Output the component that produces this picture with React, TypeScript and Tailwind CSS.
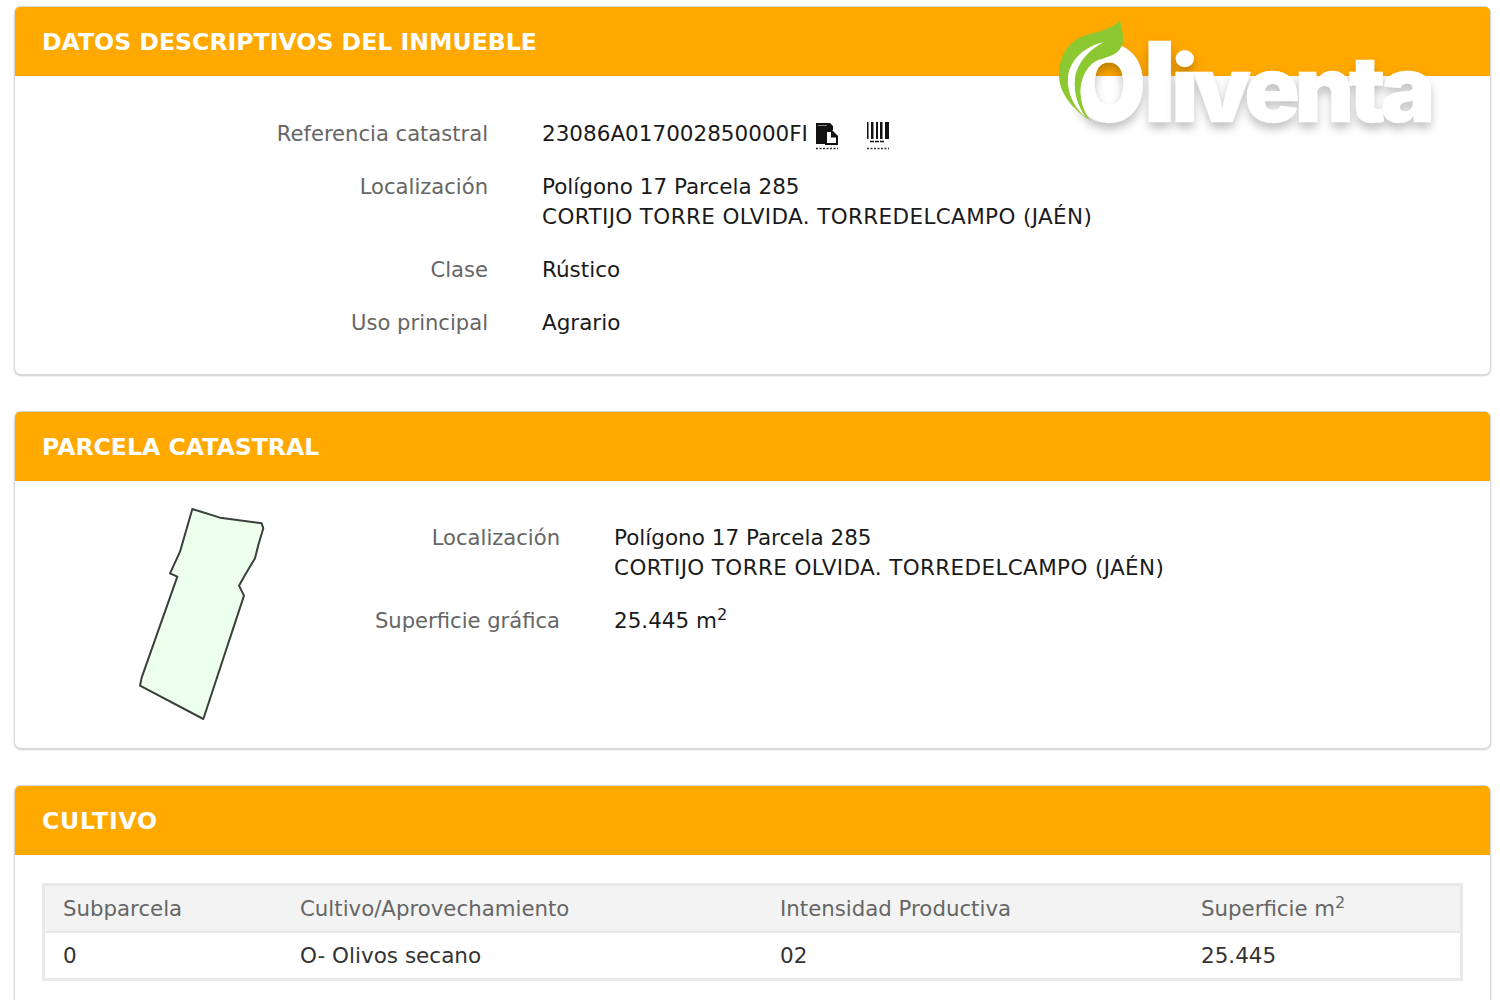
import React from "react";

const font = "font-['DejaVu_Sans',Verdana,sans-serif]";

function Header({ title, extra }: { title: string; extra?: string }) {
  return (
    <div className={`h-[69px] bg-[#ffa800] rounded-t-[5px] flex items-center pl-[27px] pt-[2px] text-white font-bold text-[23.600px] leading-none ${extra ?? ""}`}>
      {title}
    </div>
  );
}

function Row({ label, children }: { label: string; children: React.ReactNode }) {
  return (
    <>
      <div className="text-right text-[#666666] text-[21.100px]">{label}</div>
      <div className="text-[#1a1a1a]">{children}</div>
    </>
  );
}

function Caps() {
  return (
    <span className="tracking-[0.37px] [font-variant-ligatures:none]">CORTIJO TORRE OLVIDA. TORREDELCAMPO (JAÉN)</span>
  );
}

function CopyIcon() {
  return (
    <svg width="24" height="28" viewBox="0 0 24 28" className="shrink-0">
      <path d="M0 1h14l3 3v4h-6v14H0z" fill="#111" />
      <path d="M2 3.500h9" stroke="#888" strokeWidth="1" />
      <path d="M9 8h7l6 6v9H9z" fill="#111" />
      <path d="M11 10h4v5.500h5V21h-9z" fill="#fff" />
      <path d="M0 26.500h22" stroke="#333" strokeWidth="1.500" strokeDasharray="2 1.500" />
    </svg>
  );
}

function BarcodeIcon() {
  return (
    <svg width="24" height="28" viewBox="0 0 24 28" className="shrink-0">
      <path d="M0 0h1.500v17H0zM4 0h2.500v17H4zM9 0h2v17H9zM13 0h2.500v17H13zM18 0h4v17h-4z" fill="#111" />
      <path d="M3 19.500h14" stroke="#111" strokeWidth="1.500" strokeDasharray="4 1" />
      <path d="M0 26.500h22" stroke="#333" strokeWidth="1.500" strokeDasharray="2 1.500" />
    </svg>
  );
}

function Logo() {
  return (
    <div className="absolute left-[1040px] top-0 w-[460px] h-[150px] pointer-events-none">
      <div className="absolute left-[32px] top-[21px] text-white font-['Inter',sans-serif] font-black leading-[120px] whitespace-nowrap [text-shadow:0_6px_10px_rgba(0,0,0,0.25)] [-webkit-text-stroke:0.5px_white] flex items-baseline">
        <span className="inline-block text-[106px] origin-left scale-x-[0.9] tracking-[-11px]">O</span>
        <span className="text-[112px] tracking-[-5px]">l</span>
        <span className="text-[92px] tracking-[-5.500px]">iventa</span>
      </div>
      <svg width="460" height="150" viewBox="0 0 1380 450" className="absolute left-0 top-0">
        <path
          d="M240 60C244 85 256 120 244 140C232 165 205 170 175 180C140 195 118 240 122 285C125 320 138 345 152 362C95 325 58 280 57 225C56 170 85 125 130 108C170 95 215 90 240 60Z"
          fill="#8cc832"
        />
        <path
          d="M192 126C135 140 92 175 84 230C80 280 105 325 135 348C115 320 100 280 105 235C112 185 150 148 192 126Z"
          fill="#fff"
        />
      </svg>
    </div>
  );
}

export default function App() {
  const card = "border border-[#d8d8d8] rounded-[7px] bg-white shadow-[0_1px_2px_rgba(0,0,0,0.2)]";
  return (
    <div className={`${font} relative h-[1000px] overflow-hidden bg-white pl-[14px] pr-[9px] pt-[6px] text-[21.500px] leading-[30px]`}>
      <div className="flex flex-col gap-[36px]">
        <section className={card}>
          <Header title="DATOS DESCRIPTIVOS DEL INMUEBLE" />
          <div className="pt-[43px] pb-[36px] grid grid-cols-[473px_1fr] gap-x-[54px] gap-y-[23px]">
            <Row label="Referencia catastral">
              <div className="flex items-start h-[30px]">
                <span>23086A017002850000FI</span>
                <span className="ml-[8px] mt-[3px] flex gap-[27px]">
                  <CopyIcon />
                  <BarcodeIcon />
                </span>
              </div>
            </Row>
            <Row label="Localización">
              Polígono 17 Parcela 285
              <br />
              <Caps />
            </Row>
            <Row label="Clase">Rústico</Row>
            <Row label="Uso principal">Agrario</Row>
          </div>
        </section>

        <section className={card}>
          <Header title="PARCELA CATASTRAL" />
          <div className="h-[267px] flex">
            <div className="w-[265px] pl-[105px] pt-[14px] shrink-0">
              <svg width="160" height="235" viewBox="0 0 480 705">
                <path
                  d="M217 42L300 68L425 85L430 100L415 150L405 190L375 240L357 272L372 302L250 672L60 572L65 548L172 245L150 235L180 170Z"
                  fill="#edffed"
                  stroke="#3a3f3a"
                  strokeWidth="6"
                  strokeLinejoin="round"
                />
              </svg>
            </div>
            <div className="flex-1 pt-[42px]">
              <div className="grid grid-cols-[280px_1fr] gap-x-[54px] gap-y-[23px]">
                <Row label="Localización">
                  Polígono 17 Parcela 285
                  <br />
                  <Caps />
                </Row>
                <Row label="Superficie gráfica">
                  25.445 m<sup>2</sup>
                </Row>
              </div>
            </div>
          </div>
        </section>

        <section className={`${card} h-[400px]`}>
          <Header title="CULTIVO" extra="tracking-[0.8px]" />
          <div className="px-[27px] pt-[28px]">
            <div className="border-[3px] border-[#e8e8e8] grid grid-cols-[237px_480px_421px_1fr] leading-[44px]">
              {["Subparcela", "Cultivo/Aprovechamiento", "Intensidad Productiva"].map((t) => (
                <div key={t} className="bg-[#f3f3f3] text-[#666666] text-[21.300px] pl-[18px] pt-[1px] border-b-2 border-[#e8e8e8]">
                  {t}
                </div>
              ))}
              <div className="bg-[#f3f3f3] text-[#666666] text-[21.300px] pl-[18px] pt-[1px] border-b-2 border-[#e8e8e8]">
                Superficie m<sup>2</sup>
              </div>
              {["0", "O- Olivos secano", "02", "25.445"].map((t) => (
                <div key={t} className="text-[#333333] pl-[18px] pt-[1px]">
                  {t}
                </div>
              ))}
            </div>
          </div>
        </section>
      </div>
      <Logo />
    </div>
  );
}
